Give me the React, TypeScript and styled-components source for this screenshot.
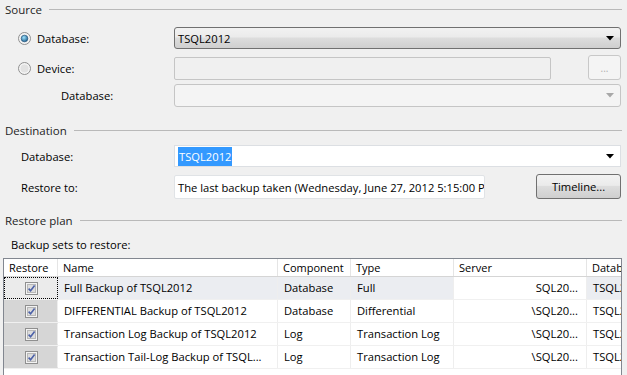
import styled, { createGlobalStyle } from "styled-components";

const GlobalStyle = createGlobalStyle`
    html, body {
        margin: 0;
        padding: 0;
        background: #f0f0f0;
    }
    body {
        font-family: "Open Sans", "Noto Sans", sans-serif;
        font-size: 11.2px;
        color: #000;
    }
`;

interface BackupSet {
    name: string;
    component: string;
    type: string;
    server: string;
    database: string;
}

const backupSets: BackupSet[] = [
    { name: "Full Backup of TSQL2012", component: "Database", type: "Full", server: "SQL20...", database: "TSQL2012" },
    { name: "DIFFERENTIAL Backup of TSQL2012", component: "Database", type: "Differential", server: "\\SQL20...", database: "TSQL2012" },
    { name: "Transaction Log Backup of TSQL2012", component: "Log", type: "Transaction Log", server: "\\SQL20...", database: "TSQL2012" },
    { name: "Transaction Tail-Log Backup of TSQL...", component: "Log", type: "Transaction Log", server: "\\SQL20...", database: "TSQL2012" },
];

const columns = [
    { title: "Restore", width: 54 },
    { title: "Name", width: 220 },
    { title: "Component", width: 73 },
    { title: "Type", width: 103 },
    { title: "Server", width: 133 },
    { title: "Database", width: 80 },
];

const RadioMark = ({ checked }: { checked?: boolean }) => (
    <svg width="13" height="13" viewBox="0 0 13 13">
        <defs>
            <radialGradient id={checked ? "rOn" : "rOff"} cx="40%" cy="35%" r="70%">
                <stop offset="0%" stopColor={checked ? "#9fe3ff" : "#ffffff"} />
                <stop offset="100%" stopColor={checked ? "#1c5d8a" : "#d6d6d6"} />
            </radialGradient>
        </defs>
        <circle cx="6.5" cy="6.5" r="6" fill="#f4f4f4" stroke="#8f8f8f" />
        <circle cx="6.5" cy="6.5" r="4" fill="#e2e2e2" />
        {checked && <circle cx="6.5" cy="6.5" r="3.3" fill="url(#rOn)" stroke="#1b4d78" strokeWidth="0.6" />}
    </svg>
);

const CheckMark = () => (
    <svg width="13" height="13" viewBox="0 0 13 13">
        <rect x="0.5" y="0.5" width="12" height="12" fill="#f3f3f3" stroke="#8f8f8f" />
        <rect x="2.5" y="2.5" width="8" height="8" fill="#dcdcdc" stroke="#b8b8b8" />
        <path d="M3.6 6.6 L5.6 8.8 L9.6 3.6" fill="none" stroke="#4c61a8" strokeWidth="1.6" />
    </svg>
);

const Arrow = ({ disabled }: { disabled?: boolean }) => (
    <svg width="8" height="5" viewBox="0 0 8 5">
        <path d="M0 0 H8 L4 4.5 Z" fill={disabled ? "#a8a8a8" : "#000"} />
    </svg>
);

export default function App() {
    return (
        <Page>
            <GlobalStyle />
            <GroupHeader>
                <span>Source</span>
                <Rule />
            </GroupHeader>
            <Row $top={9} $height={22}>
                <RadioLabel>
                    <RadioMark checked />
                    <span>Database:</span>
                </RadioLabel>
                <Combo $variant="active">
                    <span>TSQL2012</span>
                    <Arrow />
                </Combo>
            </Row>
            <Row $top={8} $height={23}>
                <RadioLabel>
                    <RadioMark />
                    <span>Device:</span>
                </RadioLabel>
                <TextBox $disabled $width={377} />
                <BrowseButton>...</BrowseButton>
            </Row>
            <Row $top={4} $height={23}>
                <Label $indent={61}>Database:</Label>
                <Combo $variant="disabled">
                    <span />
                    <Arrow disabled />
                </Combo>
            </Row>

            <GroupHeader $top={14}>
                <span>Destination</span>
                <Rule />
            </GroupHeader>
            <Row $top={6} $height={22}>
                <Label $indent={21}>Database:</Label>
                <Combo $variant="edit">
                    <Selected>TSQL2012</Selected>
                    <Arrow />
                </Combo>
            </Row>
            <Row $top={8} $height={24}>
                <Label $indent={21}>Restore to:</Label>
                <TextBox $width={311}>The last backup taken (Wednesday, June 27, 2012 5:15:00 PM)</TextBox>
                <TimelineButton>Timeline...</TimelineButton>
            </Row>

            <GroupHeader $top={12}>
                <span>Restore plan</span>
                <Rule />
            </GroupHeader>
            <SubHeading>Backup sets to restore:</SubHeading>

            <Grid>
                <GridRow $header>
                    {columns.map((c) => (
                        <HeadCell key={c.title} style={{ width: c.width }}>
                            {c.title}
                        </HeadCell>
                    ))}
                </GridRow>
                {backupSets.map((b, i) => (
                    <GridRow key={b.name} $selected={i === 0}>
                        <CheckCell $focused={i === 0} style={{ width: columns[0].width }}>
                            <CheckMark />
                        </CheckCell>
                        <Cell style={{ width: columns[1].width }}>{b.name}</Cell>
                        <Cell style={{ width: columns[2].width }}>{b.component}</Cell>
                        <Cell style={{ width: columns[3].width }}>{b.type}</Cell>
                        <ServerCell style={{ width: columns[4].width }}>{b.server}</ServerCell>
                        <Cell style={{ width: columns[5].width }}>{b.database}</Cell>
                    </GridRow>
                ))}
            </Grid>
        </Page>
    );
}

const Page = styled.div`
    width: 627px;
    height: 375px;
    overflow: hidden;
    display: flex;
    flex-direction: column;
    background: #f0f0f0;
`;

const GroupHeader = styled.div<{ $top?: number }>`
    display: flex;
    align-items: center;
    gap: 7px;
    height: 18px;
    margin-top: ${({ $top }) => $top ?? 0}px;
    padding: 0 5px 0 5px;
    font-size: 11.5px;
    color: #1e1e1e;
`;

const Rule = styled.div`
    flex: 1;
    height: 1px;
    background: #b9b9b9;
    margin-top: 1px;
`;

const Row = styled.div<{ $top: number; $height: number }>`
    display: flex;
    align-items: center;
    height: ${({ $height }) => $height}px;
    margin-top: ${({ $top }) => $top}px;
    padding-right: 6px;
`;

const RadioLabel = styled.label`
    display: flex;
    align-items: center;
    gap: 6px;
    width: 156px;
    padding-left: 18px;
`;

const Label = styled.div<{ $indent: number }>`
    width: ${({ $indent }) => 174 - $indent}px;
    padding-left: ${({ $indent }) => $indent}px;
`;

const Combo = styled.div<{ $variant: "active" | "disabled" | "edit" }>`
    flex: 1;
    height: 100%;
    box-sizing: border-box;
    display: flex;
    align-items: center;
    justify-content: space-between;
    padding: 0 6px 0 3px;
    border: 1px solid
        ${({ $variant }) =>
            $variant === "active" ? "#707070" : $variant === "edit" ? "#dcdfe3" : "#c5c5c5"};
    border-radius: ${({ $variant }) => ($variant === "edit" ? "0" : "3px")};
    background: ${({ $variant }) =>
        $variant === "active"
            ? "linear-gradient(#f2f2f2 0%, #ebebeb 45%, #dddddd 50%, #cfcfcf 100%)"
            : $variant === "edit"
            ? "#ffffff"
            : "#f4f4f4"};
`;

const Selected = styled.span`
    background: #3399ff;
    color: #fff;
    padding: 2px 1px;
`;

const TextBox = styled.div<{ $width: number; $disabled?: boolean }>`
    width: ${({ $width }) => $width}px;
    height: 100%;
    box-sizing: border-box;
    display: flex;
    align-items: center;
    padding: 0 3px;
    white-space: nowrap;
    overflow: hidden;
    border: 1px solid ${({ $disabled }) => ($disabled ? "#c5c5c5" : "#e0e3e6")};
    border-radius: 2px;
    background: ${({ $disabled }) => ($disabled ? "#f0f0f0" : "#ffffff")};
`;

const BrowseButton = styled.div`
    margin-left: auto;
    width: 33px;
    height: 25px;
    margin-top: -2px;
    box-sizing: border-box;
    display: flex;
    align-items: center;
    justify-content: center;
    color: #b0b0b0;
    font-size: 10px;
    border: 1px solid #c8c8c8;
    border-radius: 3px;
    background: #f4f4f4;
`;

const TimelineButton = styled.div`
    margin-left: auto;
    width: 85px;
    height: 25px;
    margin-top: -1px;
    box-sizing: border-box;
    display: flex;
    align-items: center;
    justify-content: center;
    border: 1px solid #707070;
    border-radius: 3px;
    background: linear-gradient(#f2f2f2 0%, #ebebeb 45%, #dddddd 50%, #cfcfcf 100%);
`;

const SubHeading = styled.div`
    margin-top: 8px;
    height: 18px;
    padding-left: 11px;
`;

const Grid = styled.div`
    margin: 3px 5px 0 3px;
    border: 1px solid #828790;
    border-bottom: none;
    background: #fff;
    overflow: hidden;
    flex: 1;
`;

const GridRow = styled.div<{ $header?: boolean; $selected?: boolean }>`
    display: flex;
    height: ${({ $header }) => ($header ? 17 : 22)}px;
    border-bottom: 1px solid ${({ $header }) => ($header ? "#d5d5d5" : "#f0f0f0")};
    background: ${({ $selected }) => ($selected ? "#ebedf1" : "#ffffff")};
    white-space: nowrap;
`;

const HeadCell = styled.div`
    flex: none;
    box-sizing: border-box;
    padding-left: 5px;
    line-height: 17px;
    font-size: 11px;
    border-right: 1px solid #e5e5e5;
    overflow: hidden;
`;

const Cell = styled.div`
    flex: none;
    box-sizing: border-box;
    padding-left: 6px;
    line-height: 22px;
    border-right: 1px solid #eeeeee;
    overflow: hidden;
    text-overflow: clip;
`;

const CheckCell = styled.div<{ $focused?: boolean }>`
    flex: none;
    box-sizing: border-box;
    display: flex;
    align-items: center;
    justify-content: center;
    background: ${({ $focused }) => ($focused ? "#ebebeb" : "#d6d6d6")};
    border: 1px ${({ $focused }) => ($focused ? "dotted #000" : "solid transparent")};
    border-right: 1px ${({ $focused }) => ($focused ? "dotted #000" : "solid #eeeeee")};
`;

const ServerCell = styled(Cell)`
    text-align: right;
    padding-right: 8px;
    background: #ffffff;
`;
